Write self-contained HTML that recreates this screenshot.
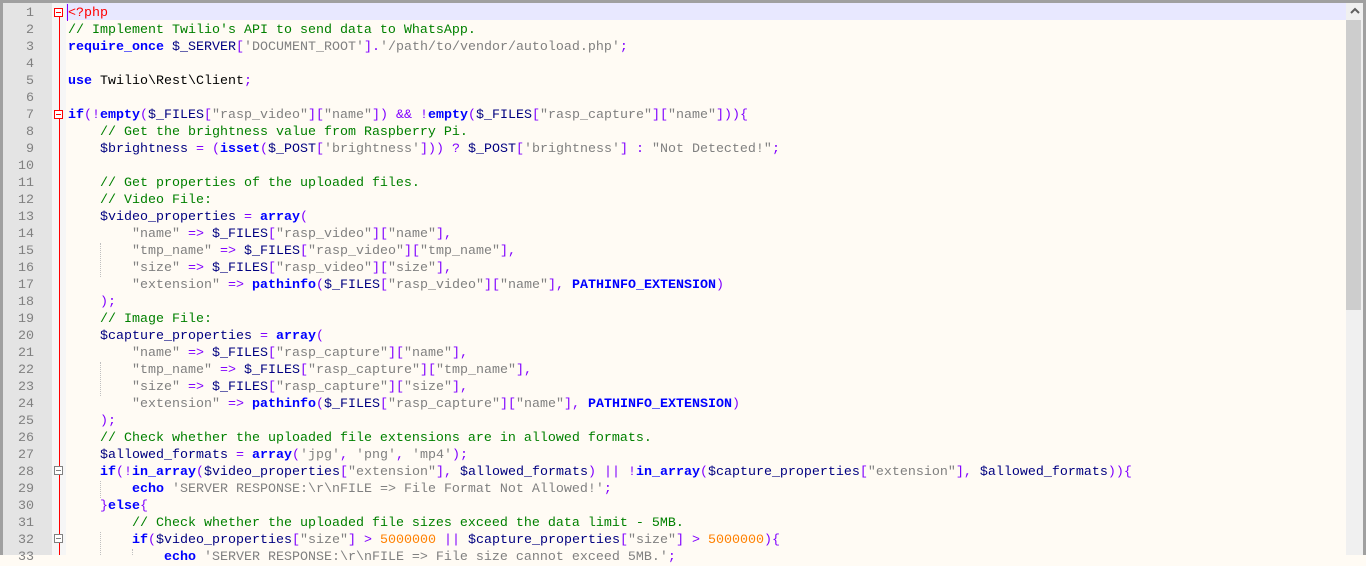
<!DOCTYPE html>
<html><head><meta charset="utf-8"><style>
html,body{margin:0;padding:0;width:1366px;height:555px;overflow:hidden;background:#fffbf4;}
.frame{position:absolute;left:0;top:0;width:1366px;height:555px;}
.bt{position:absolute;left:0;top:0;width:1366px;height:3px;background:#a0a0a0;}
.bl{position:absolute;left:0;top:0;width:3px;height:555px;background:#a0a0a0;}
.br{position:absolute;right:0;top:0;width:3px;height:555px;background:#a0a0a0;}
.gut{position:absolute;left:3px;top:3px;width:49px;height:552px;background:#e4e4e4;}
.fold{position:absolute;left:52px;top:3px;width:14px;height:552px;background:#f6f6f6;}
.txt{position:absolute;left:66px;top:3px;width:1280px;height:552px;background:#fffbf4;}
.cur{position:absolute;left:66px;top:3px;width:1280px;height:17px;background:#e8e8ff;}
.caret{position:absolute;left:67px;top:4px;width:1px;height:17px;background:#8000ff;}
.sb{position:absolute;left:1346px;top:3px;width:17px;height:552px;background:#f0f0f0;}
.thumb{position:absolute;left:1346px;top:20px;width:15px;height:290px;background:#cdcdcd;}
.arrow{position:absolute;left:1350px;top:7px;width:10px;height:8px;}
.ln,.code{margin-top:2px;}
.ln{position:absolute;left:3px;width:31px;text-align:right;font-family:"Liberation Mono","Courier New",monospace;font-size:13.33px;color:#808080;height:17px;line-height:17px;}
.code{position:absolute;left:68px;font-family:"Liberation Mono","Courier New",monospace;font-size:13.33px;white-space:pre;height:17px;line-height:17px;color:#000;}
.vl{position:absolute;left:59px;width:1px;background:#ff0000;}
.box{position:absolute;left:54px;width:9px;height:9px;border:1px solid #ff0000;background:#fff;box-sizing:border-box;}
.box::after{content:"";position:absolute;left:1px;top:3px;width:5px;height:1px;background:#ff0000;}
.box.g{border-color:#808080;}
.box.g::after{background:#808080;}
.k{color:#0000ff;font-weight:bold}
.v{color:#000080}
.s{color:#808080}
.o{color:#8000ff}
.c{color:#008000}
.n{color:#ff8000}
.r{color:#ff0000}
.gd{position:absolute;width:1px;border-left:1px dotted #c0c0c0;}
</style></head><body><div class="frame">
<div class="txt"></div>
<div class="cur"></div>
<div class="gut"></div>
<div class="fold"></div>
<div class="sb"></div>
<div class="thumb"></div>
<svg class="arrow" viewBox="0 0 10 8"><path d="M1 6 L5 2 L9 6" stroke="#606060" stroke-width="2" fill="none"/></svg>
<div class="vl" style="top:15px;height:540px"></div>
<div class="box" style="top:8px"></div>
<div class="box" style="top:110px"></div>
<div class="box g" style="top:466px"></div>
<div class="box g" style="top:534px"></div>
<div class="gd" style="left:100px;top:243px;height:34px"></div>
<div class="gd" style="left:100px;top:362px;height:34px"></div>
<div class="gd" style="left:100px;top:481px;height:17px"></div>
<div class="gd" style="left:100px;top:532px;height:23px"></div>
<div class="gd" style="left:132px;top:549px;height:6px"></div>
<div class="caret"></div>

<div class="ln" style="top:3px">1</div><div class="ln" style="top:20px">2</div><div class="ln" style="top:37px">3</div><div class="ln" style="top:54px">4</div><div class="ln" style="top:71px">5</div><div class="ln" style="top:88px">6</div><div class="ln" style="top:105px">7</div><div class="ln" style="top:122px">8</div><div class="ln" style="top:139px">9</div><div class="ln" style="top:156px">10</div><div class="ln" style="top:173px">11</div><div class="ln" style="top:190px">12</div><div class="ln" style="top:207px">13</div><div class="ln" style="top:224px">14</div><div class="ln" style="top:241px">15</div><div class="ln" style="top:258px">16</div><div class="ln" style="top:275px">17</div><div class="ln" style="top:292px">18</div><div class="ln" style="top:309px">19</div><div class="ln" style="top:326px">20</div><div class="ln" style="top:343px">21</div><div class="ln" style="top:360px">22</div><div class="ln" style="top:377px">23</div><div class="ln" style="top:394px">24</div><div class="ln" style="top:411px">25</div><div class="ln" style="top:428px">26</div><div class="ln" style="top:445px">27</div><div class="ln" style="top:462px">28</div><div class="ln" style="top:479px">29</div><div class="ln" style="top:496px">30</div><div class="ln" style="top:513px">31</div><div class="ln" style="top:530px">32</div><div class="ln" style="top:547px">33</div>

<div class="code" style="top:3px"><span class="r">&lt;?php</span></div>
<div class="code" style="top:20px"><span class="c">// Implement Twilio's API to send data to WhatsApp.</span></div>
<div class="code" style="top:37px"><span class="k">require_once</span> <span class="v">$_SERVER</span><span class="o">[</span><span class="s">'DOCUMENT_ROOT'</span><span class="o">].</span><span class="s">'/path/to/vendor/autoload.php'</span><span class="o">;</span></div>
<div class="code" style="top:71px"><span class="k">use</span> Twilio\Rest\Client<span class="o">;</span></div>
<div class="code" style="top:105px"><span class="k">if</span><span class="o">(!</span><span class="k">empty</span><span class="o">(</span><span class="v">$_FILES</span><span class="o">[</span><span class="s">"rasp_video"</span><span class="o">][</span><span class="s">"name"</span><span class="o">]) &amp;&amp; !</span><span class="k">empty</span><span class="o">(</span><span class="v">$_FILES</span><span class="o">[</span><span class="s">"rasp_capture"</span><span class="o">][</span><span class="s">"name"</span><span class="o">])){</span></div>
<div class="code" style="top:122px">    <span class="c">// Get the brightness value from Raspberry Pi.</span></div>
<div class="code" style="top:139px">    <span class="v">$brightness</span> <span class="o">= (</span><span class="k">isset</span><span class="o">(</span><span class="v">$_POST</span><span class="o">[</span><span class="s">'brightness'</span><span class="o">])) ?</span> <span class="v">$_POST</span><span class="o">[</span><span class="s">'brightness'</span><span class="o">] :</span> <span class="s">"Not Detected!"</span><span class="o">;</span></div>
<div class="code" style="top:173px">    <span class="c">// Get properties of the uploaded files.</span></div>
<div class="code" style="top:190px">    <span class="c">// Video File:</span></div>
<div class="code" style="top:207px">    <span class="v">$video_properties</span> <span class="o">=</span> <span class="k">array</span><span class="o">(</span></div>
<div class="code" style="top:224px">        <span class="s">"name"</span> <span class="o">=&gt;</span> <span class="v">$_FILES</span><span class="o">[</span><span class="s">"rasp_video"</span><span class="o">][</span><span class="s">"name"</span><span class="o">],</span></div>
<div class="code" style="top:241px">        <span class="s">"tmp_name"</span> <span class="o">=&gt;</span> <span class="v">$_FILES</span><span class="o">[</span><span class="s">"rasp_video"</span><span class="o">][</span><span class="s">"tmp_name"</span><span class="o">],</span></div>
<div class="code" style="top:258px">        <span class="s">"size"</span> <span class="o">=&gt;</span> <span class="v">$_FILES</span><span class="o">[</span><span class="s">"rasp_video"</span><span class="o">][</span><span class="s">"size"</span><span class="o">],</span></div>
<div class="code" style="top:275px">        <span class="s">"extension"</span> <span class="o">=&gt;</span> <span class="k">pathinfo</span><span class="o">(</span><span class="v">$_FILES</span><span class="o">[</span><span class="s">"rasp_video"</span><span class="o">][</span><span class="s">"name"</span><span class="o">],</span> <span class="k">PATHINFO_EXTENSION</span><span class="o">)</span></div>
<div class="code" style="top:292px">    <span class="o">);</span></div>
<div class="code" style="top:309px">    <span class="c">// Image File:</span></div>
<div class="code" style="top:326px">    <span class="v">$capture_properties</span> <span class="o">=</span> <span class="k">array</span><span class="o">(</span></div>
<div class="code" style="top:343px">        <span class="s">"name"</span> <span class="o">=&gt;</span> <span class="v">$_FILES</span><span class="o">[</span><span class="s">"rasp_capture"</span><span class="o">][</span><span class="s">"name"</span><span class="o">],</span></div>
<div class="code" style="top:360px">        <span class="s">"tmp_name"</span> <span class="o">=&gt;</span> <span class="v">$_FILES</span><span class="o">[</span><span class="s">"rasp_capture"</span><span class="o">][</span><span class="s">"tmp_name"</span><span class="o">],</span></div>
<div class="code" style="top:377px">        <span class="s">"size"</span> <span class="o">=&gt;</span> <span class="v">$_FILES</span><span class="o">[</span><span class="s">"rasp_capture"</span><span class="o">][</span><span class="s">"size"</span><span class="o">],</span></div>
<div class="code" style="top:394px">        <span class="s">"extension"</span> <span class="o">=&gt;</span> <span class="k">pathinfo</span><span class="o">(</span><span class="v">$_FILES</span><span class="o">[</span><span class="s">"rasp_capture"</span><span class="o">][</span><span class="s">"name"</span><span class="o">],</span> <span class="k">PATHINFO_EXTENSION</span><span class="o">)</span></div>
<div class="code" style="top:411px">    <span class="o">);</span></div>
<div class="code" style="top:428px">    <span class="c">// Check whether the uploaded file extensions are in allowed formats.</span></div>
<div class="code" style="top:445px">    <span class="v">$allowed_formats</span> <span class="o">=</span> <span class="k">array</span><span class="o">(</span><span class="s">'jpg'</span><span class="o">,</span> <span class="s">'png'</span><span class="o">,</span> <span class="s">'mp4'</span><span class="o">);</span></div>
<div class="code" style="top:462px">    <span class="k">if</span><span class="o">(!</span><span class="k">in_array</span><span class="o">(</span><span class="v">$video_properties</span><span class="o">[</span><span class="s">"extension"</span><span class="o">],</span> <span class="v">$allowed_formats</span><span class="o">) || !</span><span class="k">in_array</span><span class="o">(</span><span class="v">$capture_properties</span><span class="o">[</span><span class="s">"extension"</span><span class="o">],</span> <span class="v">$allowed_formats</span><span class="o">)){</span></div>
<div class="code" style="top:479px">        <span class="k">echo</span> <span class="s">'SERVER RESPONSE:\r\nFILE =&gt; File Format Not Allowed!'</span><span class="o">;</span></div>
<div class="code" style="top:496px">    <span class="o">}</span><span class="k">else</span><span class="o">{</span></div>
<div class="code" style="top:513px">        <span class="c">// Check whether the uploaded file sizes exceed the data limit - 5MB.</span></div>
<div class="code" style="top:530px">        <span class="k">if</span><span class="o">(</span><span class="v">$video_properties</span><span class="o">[</span><span class="s">"size"</span><span class="o">] &gt;</span> <span class="n">5000000</span> <span class="o">||</span> <span class="v">$capture_properties</span><span class="o">[</span><span class="s">"size"</span><span class="o">] &gt;</span> <span class="n">5000000</span><span class="o">){</span></div>
<div class="code" style="top:547px">            <span class="k">echo</span> <span class="s">'SERVER RESPONSE:\r\nFILE =&gt; File size cannot exceed 5MB.'</span><span class="o">;</span></div>
<div class="bt"></div><div class="bl"></div><div class="br"></div>
</div></body></html>
